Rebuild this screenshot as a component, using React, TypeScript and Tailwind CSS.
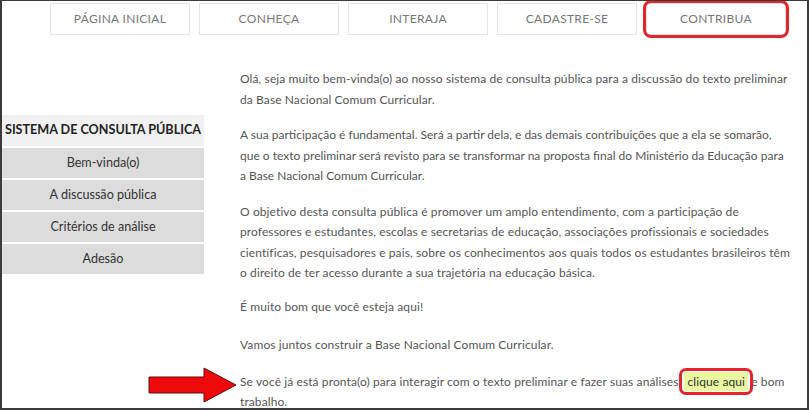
const menu = ["PÁGINA INICIAL", "CONHEÇA", "INTERAJA", "CADASTRE-SE", "CONTRIBUA"];

const sideItems = ["Bem-vinda(o)", "A discussão pública", "Critérios de análise", "Adesão"];

function RedArrow() {
  return (
    <svg
      className="absolute left-[146px] top-[366px]"
      width="90"
      height="38"
      viewBox="0 0 90 38"
      aria-hidden
    >
      <polygon
        points="1,10 56,10 56,1 88,18 56,35 56,26 1,26"
        fill="#ee0a0a"
        stroke="#5a1010"
        strokeWidth="1"
      />
    </svg>
  );
}

export default function App() {
  return (
    <div
      className="relative h-[410px] w-[809px] overflow-hidden border-t border-l-2 border-r-2 border-b-2 border-[#3b3b3b] bg-white"
      style={{ fontFamily: "Lato, 'Open Sans', sans-serif" }}
    >
      {/* top menu */}
      <nav className="flex gap-[9px] pl-[48px] pt-[2px]">
        {menu.map((item) => (
          <div key={item} className="relative">
            <div className="flex h-[32px] w-[140px] items-center justify-center border border-[#e4e4e4] text-[12px] tracking-[0.3px] text-[#777]">
              {item}
            </div>
            {item === "CONTRIBUA" && (
              <div className="absolute -inset-[3px] rounded-[8px] border-[3px] border-[#e3262b]" />
            )}
          </div>
        ))}
      </nav>

      <div className="mt-[34px] flex items-start gap-[36px]">
        {/* sidebar */}
        <aside className="mt-[46px] w-[202px] text-[12.6px]">
          <div className="flex h-[31px] items-center justify-center bg-[#f1f1f1] font-bold text-[#222]">
            SISTEMA DE CONSULTA PÚBLICA
          </div>
          {sideItems.map((s) => (
            <div
              key={s}
              className="mt-[2px] flex h-[30px] items-center justify-center bg-[#dcdcdc] text-[#333]"
            >
              {s}
            </div>
          ))}
        </aside>

        {/* content */}
        <main className="w-[553px] text-[12px] leading-[20.5px] tracking-[0.1px] text-[#555]">
          <p className="mb-[15px]">
            Olá, seja muito bem-vinda(o) ao nosso sistema de consulta pública para a discussão do texto preliminar da
            Base Nacional Comum Curricular.
          </p>
          <p className="mb-[15px] tracking-normal">
            A sua participação é fundamental. Será a partir dela, e das demais contribuições que a ela se somarão,
            <br />
            que o texto preliminar será revisto para se transformar na proposta final do Ministério da Educação para
            <br />a Base Nacional Comum Curricular.
          </p>
          <p className="mb-[13px]">
            O objetivo desta consulta pública é promover um amplo entendimento, com a participação de professores e
            estudantes, escolas e secretarias de educação, associações profissionais e sociedades científicas,
            pesquisadores e pais, sobre os conhecimentos aos quais todos os estudantes brasileiros têm o direito de ter
            acesso durante a sua trajetória na educação básica.
          </p>
          <p className="mb-[18px]">É muito bom que você esteja aqui!</p>
          <p className="mb-[16px]">Vamos juntos construir a Base Nacional Comum Curricular.</p>
          <p>
            Se você já está pronta(o) para interagir com o texto preliminar e fazer suas análises,{" "}
            <span className="relative bg-[#e9f7a1] px-[3px] py-[2px] text-[#333]">
              clique aqui
              <span className="absolute -inset-x-[5px] -inset-y-[4px] rounded-[7px] border-[3px] border-[#e3262b]" />
            </span>{" "}
            e bom trabalho.
          </p>
        </main>
      </div>

      <RedArrow />
    </div>
  );
}
